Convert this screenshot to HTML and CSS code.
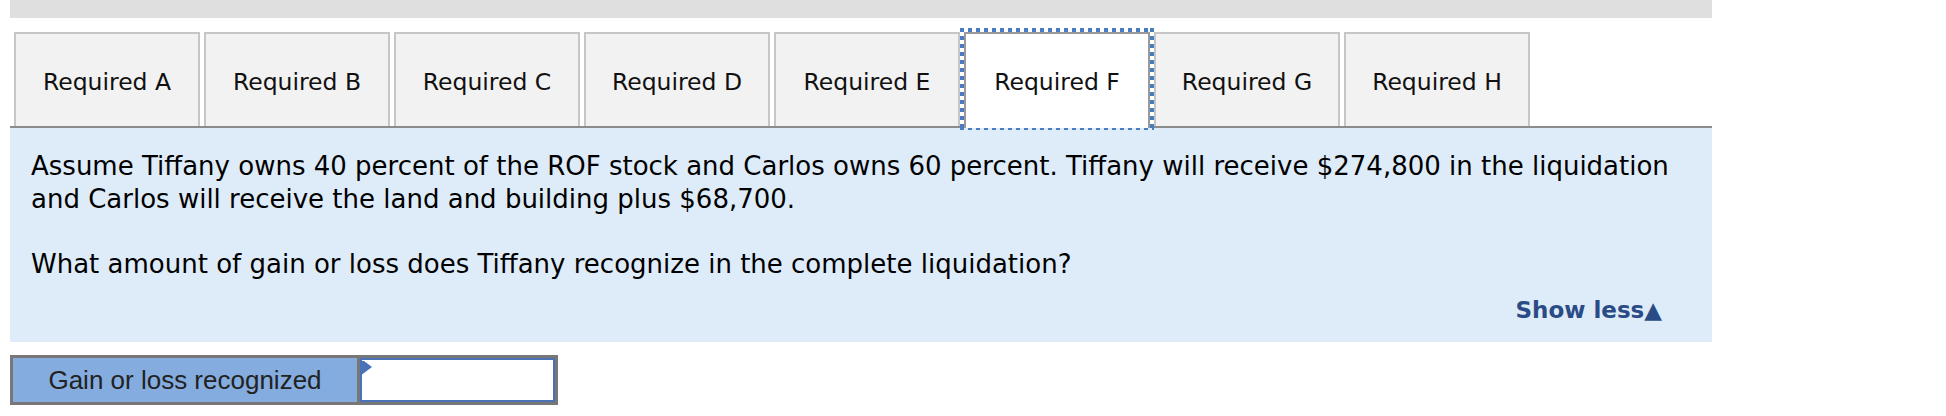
FILE: index.html
```html
<!DOCTYPE html>
<html lang="en">
<head>
    <meta charset="UTF-8">
    <title>Required F</title>
    <link rel="stylesheet" href="styles.css">
</head>
<body>
    <div class="page">
        <div class="top-bar"></div>

        <div class="tabs">
            <div class="tab">Required A</div>
            <div class="tab">Required B</div>
            <div class="tab">Required C</div>
            <div class="tab">Required D</div>
            <div class="tab">Required E</div>
            <div class="tab active">Required F</div>
            <div class="tab">Required G</div>
            <div class="tab">Required H</div>
        </div>

        <div class="panel">
            <p class="question">Assume Tiffany owns 40 percent of the ROF stock and Carlos owns 60 percent. Tiffany will receive $274,800 in the liquidation and Carlos will receive the land and building plus $68,700.<br><br>What amount of gain or loss does Tiffany recognize in the complete liquidation?</p>
            <div class="show-less"><a href="#">Show less&#9650;</a></div>
        </div>

        <div class="answer">
            <div class="answer-label">Gain or loss recognized</div>
            <div class="answer-cell">
                <svg class="flag" width="12" height="15" viewBox="0 0 12 15">
                    <polygon points="0,0 4,0 12,6 0,15" fill="#4a72b8"/>
                </svg>
                <input type="text" class="answer-input">
            </div>
        </div>
    </div>
</body>
</html>
```

FILE: styles.css
```css
:root {
    --panel-blue: #deebf8;
    --link-blue: #2a4b85;
    --focus-blue: #4a7cc4;
    --tab-border: #c6c6c6;
}

body {
    margin: 0;
    background: #fff;
    font-family: 'DejaVu Sans', Verdana, sans-serif;
    color: #111;
}

.page {
    width: 1702px;
    margin-left: 10px;
}

.top-bar {
    height: 18px;
    background: #dfdfdf;
}

.tabs {
    display: flex;
    align-items: flex-end;
    gap: 4px;
    margin-top: 14px;
    padding-left: 4px;
    border-bottom: 2px solid #8c8c8c;
}

.tab {
    position: relative;
    width: 182px;
    padding: 34px 0 30px;
    background: #f2f2f2;
    border: 2px solid var(--tab-border);
    border-bottom: none;
    font-size: 23.5px;
    line-height: 28px;
    text-align: center;
    cursor: pointer;
}

.tab.active {
    background: #fff;
    border-color: #999;
    padding-bottom: 32px;
    margin-bottom: -2px;
}

/* dotted focus ring round the current tab */
.tab.active::after {
    content: '';
    position: absolute;
    top: -6px;
    left: -6px;
    right: -6px;
    bottom: -2px;
    pointer-events: none;
    background:
        repeating-linear-gradient(90deg, var(--focus-blue) 0 4px, transparent 4px 8px) top / 100% 4px no-repeat,
        repeating-linear-gradient(90deg, var(--focus-blue) 0 4px, transparent 4px 8px) bottom / 100% 2px no-repeat,
        repeating-linear-gradient(180deg, var(--focus-blue) 0 4px, transparent 4px 8px) left / 4px 100% no-repeat,
        repeating-linear-gradient(180deg, var(--focus-blue) 0 4px, transparent 4px 8px) right / 4px 100% no-repeat;
}

.panel {
    background: var(--panel-blue);
    padding: 22px 14px 18px 21px;
}

.question {
    margin: 0;
    font-size: 26px;
    line-height: 32.5px;
    color: #000;
}

.show-less {
    margin: 17px 36px 0 0;
    text-align: right;
    font-size: 23px;
    line-height: 27px;
    font-weight: bold;
}

.show-less a {
    color: var(--link-blue);
    text-decoration: none;
}

.answer {
    display: inline-flex;
    margin-top: 13px;
    border: 3px solid #777;
}

.answer-label {
    width: 344px;
    height: 44px;
    line-height: 44px;
    background: #84acdf;
    border-right: 3px solid #777;
    font-family: 'Liberation Sans', Arial, sans-serif;
    font-size: 26px;
    color: #222;
    text-align: center;
}

.answer-cell {
    position: relative;
    width: 195px;
    height: 44px;
}

.answer-input {
    box-sizing: border-box;
    display: block;
    width: 100%;
    height: 100%;
    margin: 0;
    border: 2px solid #4a72b8;
    background: #fff;
    outline: none;
}

.flag {
    position: absolute;
    top: 3px;
    left: 0;
}
```
